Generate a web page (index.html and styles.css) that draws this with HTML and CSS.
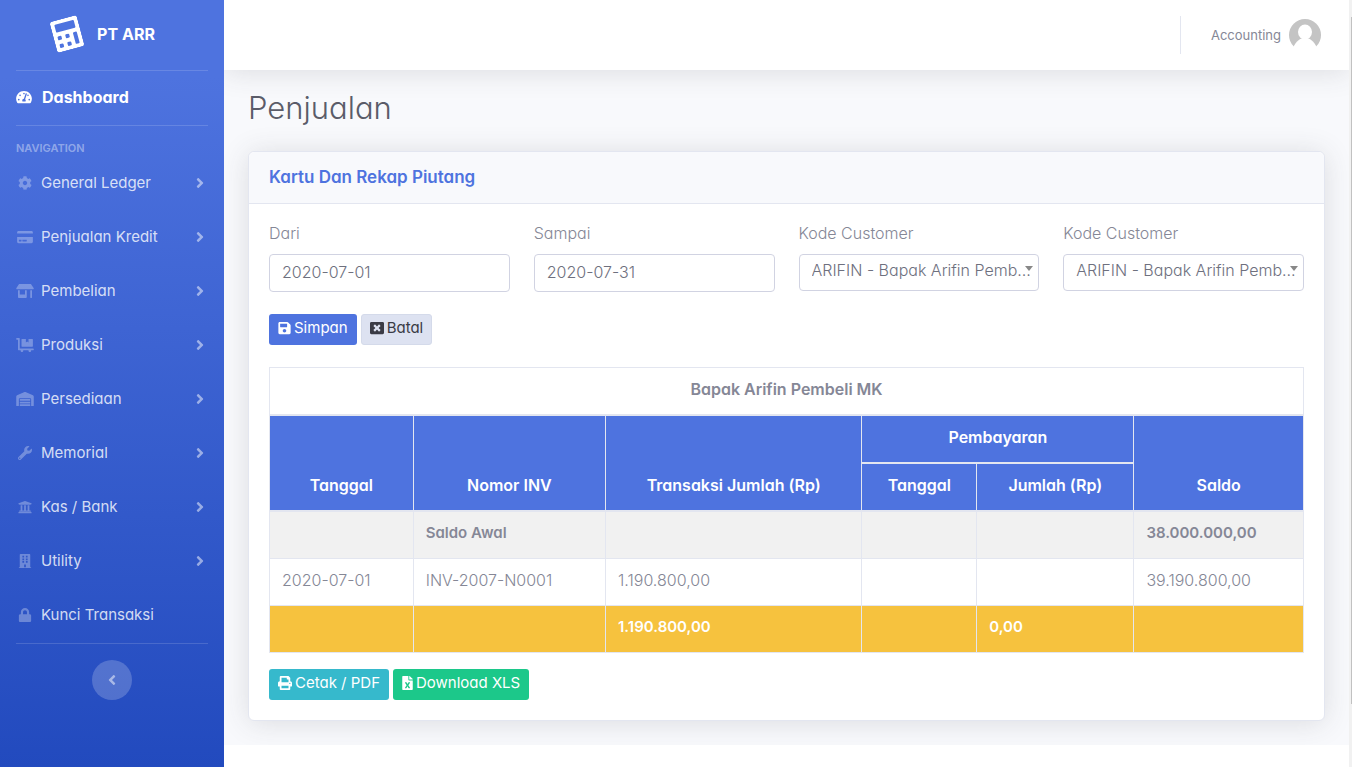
FILE: index.html
```html
<!DOCTYPE html>
<html lang="id">
<head>
<meta charset="utf-8">
<meta name="viewport" content="width=device-width, initial-scale=1">
<title>PT ARR - Penjualan</title>
<link rel="stylesheet" href="styles.css">
</head>
<body>
<svg class="sprite" aria-hidden="true">
  <symbol id="calculator" viewBox="0 0 448 512"><path d="M400 0H48C22.400 0 0 22.400 0 48v416c0 25.600 22.400 48 48 48h352c25.600 0 48-22.400 48-48V48c0-25.600-22.400-48-48-48zM128 435.200c0 6.400-6.400 12.800-12.800 12.800H76.800c-6.400 0-12.800-6.400-12.800-12.800v-38.400c0-6.400 6.400-12.800 12.800-12.800h38.400c6.400 0 12.800 6.400 12.800 12.800v38.400zm0-128c0 6.400-6.400 12.800-12.800 12.800H76.800c-6.400 0-12.800-6.400-12.800-12.800v-38.400c0-6.400 6.400-12.800 12.800-12.800h38.400c6.400 0 12.800 6.400 12.800 12.800v38.400zm128 128c0 6.400-6.400 12.800-12.800 12.800h-38.400c-6.400 0-12.800-6.400-12.800-12.800v-38.400c0-6.400 6.400-12.800 12.800-12.800h38.400c6.400 0 12.800 6.400 12.800 12.800v38.400zm0-128c0 6.400-6.400 12.800-12.800 12.800h-38.400c-6.400 0-12.800-6.400-12.800-12.800v-38.400c0-6.400 6.400-12.800 12.800-12.800h38.400c6.400 0 12.800 6.400 12.800 12.800v38.400zm128 128c0 6.400-6.400 12.800-12.800 12.800h-38.400c-6.400 0-12.800-6.400-12.800-12.800V268.800c0-6.400 6.400-12.800 12.800-12.800h38.400c6.400 0 12.800 6.400 12.800 12.800v166.400zm0-256c0 6.400-6.400 12.800-12.800 12.800H76.800c-6.400 0-12.800-6.400-12.800-12.800V76.800C64 70.400 70.400 64 76.800 64h294.400c6.400 0 12.800 6.400 12.800 12.800v102.400z"/></symbol>
  <symbol id="gauge" viewBox="0 0 576 512"><path d="M288 32C128.940 32 0 160.940 0 320c0 52.800 14.250 102.260 39.060 144.800 5.610 9.620 16.300 15.200 27.440 15.200h443c11.140 0 21.830-5.580 27.440-15.200C561.750 422.260 576 372.800 576 320c0-159.060-128.940-288-288-288zm0 64c14.710 0 26.580 10.130 30.320 23.650-1.110 2.260-2.640 4.230-3.450 6.670l-9.220 27.670c-5.130 3.490-10.970 6.010-17.640 6.010-17.670 0-32-14.330-32-32S270.330 96 288 96zM96 384c-17.670 0-32-14.330-32-32s14.330-32 32-32 32 14.330 32 32-14.330 32-32 32zm48-160c-17.670 0-32-14.330-32-32s14.330-32 32-32 32 14.330 32 32-14.330 32-32 32zm246.770-72.410l-61.330 184C343.130 347.330 352 364.540 352 384c0 11.720-3.380 22.550-8.880 32H232.880c-5.500-9.450-8.880-20.280-8.880-32 0-33.940 26.500-61.430 59.900-63.590l61.340-184.010c4.170-12.560 17.730-19.450 30.360-15.170 12.570 4.190 19.350 17.790 15.170 30.360zm14.660 57.200l15.520-46.550c3.470-1.290 7.130-2.230 11.050-2.230 17.670 0 32 14.330 32 32s-14.330 32-32 32c-11.380-.01-20.890-6.280-26.570-15.220zM480 384c-17.670 0-32-14.330-32-32s14.330-32 32-32 32 14.330 32 32-14.330 32-32 32z"/></symbol>
  <symbol id="cog" viewBox="0 0 512 512"><path d="M487.400 315.700l-42.600-24.600c4.300-23.200 4.300-47 0-70.200l42.600-24.600c4.900-2.800 7.100-8.600 5.500-14-11.100-35.600-30-67.800-54.700-94.600-3.800-4.100-10-5.100-14.800-2.300L380.800 110c-17.900-15.400-38.500-27.300-60.800-35.100V25.800c0-5.600-3.900-10.500-9.400-11.700-36.700-8.200-74.300-7.800-109.200 0-5.500 1.200-9.400 6.100-9.400 11.700V75c-22.200 7.900-42.800 19.800-60.800 35.100L88.700 85.500c-4.900-2.800-11-1.900-14.800 2.300-24.700 26.700-43.600 58.900-54.700 94.600-1.700 5.400.6 11.200 5.500 14L67.300 221c-4.300 23.200-4.300 47 0 70.200l-42.600 24.600c-4.900 2.800-7.100 8.600-5.500 14 11.100 35.600 30 67.800 54.700 94.600 3.800 4.100 10 5.100 14.800 2.300l42.600-24.600c17.900 15.400 38.500 27.300 60.800 35.100v49.200c0 5.600 3.900 10.500 9.400 11.700 36.700 8.200 74.300 7.800 109.200 0 5.500-1.200 9.400-6.100 9.400-11.700v-49.200c22.200-7.900 42.800-19.800 60.800-35.100l42.600 24.600c4.900 2.800 11 1.900 14.800-2.300 24.700-26.700 43.600-58.900 54.700-94.600 1.500-5.500-.7-11.300-5.600-14.100zM256 336c-44.100 0-80-35.900-80-80s35.900-80 80-80 80 35.900 80 80-35.900 80-80 80z"/></symbol>
  <symbol id="credit-card" viewBox="0 0 576 512"><path d="M0 432c0 26.500 21.500 48 48 48h480c26.500 0 48-21.500 48-48V256H0v176zm192-68c0-6.600 5.400-12 12-12h136c6.600 0 12 5.400 12 12v40c0 6.600-5.400 12-12 12H204c-6.600 0-12-5.400-12-12v-40zm-128 0c0-6.600 5.400-12 12-12h72c6.600 0 12 5.400 12 12v40c0 6.600-5.400 12-12 12H76c-6.600 0-12-5.400-12-12v-40zM576 80v48H0V80c0-26.500 21.500-48 48-48h480c26.500 0 48 21.500 48 48z"/></symbol>
  <symbol id="store" viewBox="0 0 640 512"><path d="M320 384H128V224H64v256c0 17.700 14.300 32 32 32h256c17.700 0 32-14.300 32-32V224h-64v160zm314.600-241.800l-85.300-128c-6-8.900-16-14.200-26.700-14.200H117.400c-10.700 0-20.700 5.300-26.600 14.200l-85.300 128c-14.200 21.300 1 49.800 26.600 49.800H608c25.500 0 40.700-28.500 26.600-49.800zM512 496c0 8.800 7.200 16 16 16h32c8.800 0 16-7.200 16-16V224h-64v272z"/></symbol>
  <symbol id="flatbed" viewBox="0 0 640 512"><path d="M208 320h384c8.800 0 16-7.200 16-16V48c0-8.800-7.200-16-16-16H448v128l-48-32-48 32V32H208c-8.800 0-16 7.200-16 16v256c0 8.800 7.200 16 16 16zm416 64H128V16c0-8.800-7.200-16-16-16H16C7.200 0 0 7.200 0 16v32c0 8.800 7.200 16 16 16h48v368c0 8.800 7.200 16 16 16h82.900c-1.800 5-2.900 10.400-2.900 16 0 26.500 21.500 48 48 48s48-21.500 48-48c0-5.600-1.200-11-2.900-16H451c-1.800 5-2.900 10.400-2.900 16 0 26.500 21.500 48 48 48s48-21.500 48-48c0-5.600-1.200-11-2.900-16H624c8.800 0 16-7.200 16-16v-32c0-8.800-7.200-16-16-16z"/></symbol>
  <symbol id="warehouse" viewBox="0 0 640 512"><path d="M504 352H136.400c-4.400 0-8 3.600-8 8l-.1 48c0 4.400 3.600 8 8 8H504c4.400 0 8-3.600 8-8v-48c0-4.400-3.600-8-8-8zm0 96H136.100c-4.400 0-8 3.600-8 8l-.1 48c0 4.400 3.600 8 8 8h368c4.400 0 8-3.600 8-8v-48c0-4.400-3.600-8-8-8zm0-192H136.600c-4.400 0-8 3.600-8 8l-.1 48c0 4.400 3.600 8 8 8H504c4.400 0 8-3.600 8-8v-48c0-4.400-3.600-8-8-8zm106.500-139L338.400 3.700a48.150 48.150 0 0 0-36.900 0L29.500 117C11.700 124.500 0 141.900 0 161.300V504c0 4.400 3.600 8 8 8h80c4.400 0 8-3.600 8-8V256c0-17.600 14.600-32 32.600-32h382.800c18 0 32.600 14.400 32.600 32v248c0 4.400 3.600 8 8 8h80c4.400 0 8-3.600 8-8V161.300c0-19.400-11.700-36.800-29.500-44.300z"/></symbol>
  <symbol id="wrench" viewBox="0 0 512 512"><path d="M507.730 109.100c-2.240-9.030-13.540-12.090-20.120-5.510l-74.360 74.360-67.880-11.310-11.310-67.880 74.360-74.360c6.620-6.620 3.430-17.900-5.660-20.160-47.380-11.740-99.550.91-136.580 37.930-39.640 39.640-50.550 97.100-34.050 147.200L18.740 402.760c-24.990 24.990-24.990 65.510 0 90.500 24.990 24.990 65.510 24.990 90.500 0l213.210-213.210c50.120 16.710 107.470 5.680 147.370-34.220 37.070-37.070 49.700-89.320 37.910-136.730zM64 472c-13.250 0-24-10.750-24-24 0-13.260 10.750-24 24-24s24 10.740 24 24c0 13.250-10.750 24-24 24z"/></symbol>
  <symbol id="bank" viewBox="0 0 512 512"><path d="M496 128v16a8 8 0 0 1-8 8h-24v12c0 6.627-5.373 12-12 12H60c-6.627 0-12-5.373-12-12v-12H24a8 8 0 0 1-8-8v-16a8 8 0 0 1 4.941-7.392l232-88a7.996 7.996 0 0 1 6.118 0l232 88A8 8 0 0 1 496 128zm-24 304H40c-13.255 0-24 10.745-24 24v16a8 8 0 0 0 8 8h464a8 8 0 0 0 8-8v-16c0-13.255-10.745-24-24-24zM96 192v192H60c-6.627 0-12 5.373-12 12v20h416v-20c0-6.627-5.373-12-12-12h-36V192h-64v192h-64V192h-64v192h-64V192H96z"/></symbol>
  <symbol id="building" viewBox="0 0 448 512"><path fill-rule="evenodd" d="M436 480h-20V24c0-13.255-10.745-24-24-24H56C42.745 0 32 10.745 32 24v456H12c-6.627 0-12 5.373-12 12v20h448v-20c0-6.627-5.373-12-12-12zM128 64h64v64h-64zM256 64h64v64h-64zM128 160h64v64h-64zM256 160h64v64h-64zM128 256h64v64h-64zM256 256h64v64h-64zM192 384h64v96h-64z"/></symbol>
  <symbol id="lock" viewBox="0 0 448 512"><path d="M400 224h-24v-72C376 68.200 307.800 0 224 0S72 68.200 72 152v72H48c-26.500 0-48 21.500-48 48v192c0 26.500 21.500 48 48 48h352c26.500 0 48-21.500 48-48V272c0-26.500-21.500-48-48-48zm-104 0H152v-72c0-39.700 32.300-72 72-72s72 32.300 72 72v72z"/></symbol>
  <symbol id="angle-right" viewBox="0 0 256 512"><path d="M224.300 273l-136 136c-9.400 9.400-24.600 9.400-33.900 0l-22.600-22.600c-9.400-9.400-9.400-24.600 0-33.900l96.400-96.400-96.400-96.400c-9.400-9.400-9.400-24.600 0-33.900L54.300 103c9.400-9.400 24.600-9.400 33.900 0l136 136c9.500 9.400 9.500 24.600.1 34z"/></symbol>
  <symbol id="angle-left" viewBox="0 0 256 512"><path d="M31.700 239l136-136c9.400-9.400 24.600-9.400 33.900 0l22.600 22.600c9.400 9.400 9.400 24.600 0 33.900L127.900 256l96.400 96.400c9.400 9.400 9.400 24.600 0 33.900L201.700 409c-9.400 9.400-24.600 9.400-33.900 0l-136-136c-9.500-9.400-9.500-24.600-.1-34z"/></symbol>
  <symbol id="save" viewBox="0 0 448 512"><path d="M433.941 129.941l-83.882-83.882A48 48 0 0 0 316.118 32H48C21.490 32 0 53.490 0 80v352c0 26.510 21.490 48 48 48h352c26.510 0 48-21.490 48-48V163.882a48 48 0 0 0-14.059-33.941zM224 416c-35.346 0-64-28.654-64-64 0-35.346 28.654-64 64-64s64 28.654 64 64c0 35.346-28.654 64-64 64zm96-304.520V212c0 6.627-5.373 12-12 12H76c-6.627 0-12-5.373-12-12V108c0-6.627 5.373-12 12-12h228.520c3.183 0 6.235 1.264 8.485 3.515l3.480 3.480A11.996 11.996 0 0 1 320 111.480z"/></symbol>
  <symbol id="close" viewBox="0 0 512 512"><path d="M464 32H48C21.500 32 0 53.500 0 80v352c0 26.500 21.500 48 48 48h416c26.500 0 48-21.500 48-48V80c0-26.500-21.500-48-48-48zm-83.600 290.500c4.800 4.800 4.800 12.600 0 17.400l-40.500 40.500c-4.800 4.800-12.600 4.800-17.400 0L256 313.300l-66.500 67.100c-4.800 4.800-12.600 4.800-17.400 0l-40.500-40.500c-4.800-4.800-4.800-12.600 0-17.400l67.100-66.500-67.100-66.500c-4.800-4.800-4.800-12.600 0-17.400l40.500-40.500c4.800-4.800 12.600-4.800 17.400 0l66.500 67.100 66.500-67.100c4.800-4.800 12.600-4.800 17.400 0l40.500 40.500c4.800 4.800 4.800 12.600 0 17.400L313.300 256l67.100 66.500z"/></symbol>
  <symbol id="print" viewBox="0 0 512 512"><path d="M448 192V77.250c0-8.490-3.370-16.620-9.370-22.630L393.370 9.370c-6-6-14.140-9.370-22.630-9.370H96C78.330 0 64 14.330 64 32v160c-35.350 0-64 28.650-64 64v112c0 8.840 7.160 16 16 16h48v96c0 17.670 14.330 32 32 32h320c17.670 0 32-14.330 32-32v-96h48c8.840 0 16-7.160 16-16V256c0-35.350-28.650-64-64-64zm-64 256H128v-96h256v96zm0-224H128V64h192v48c0 8.840 7.160 16 16 16h48v96zm48 72c-13.250 0-24-10.750-24-24 0-13.260 10.750-24 24-24s24 10.740 24 24c0 13.250-10.750 24-24 24z"/></symbol>
  <symbol id="excel" viewBox="0 0 384 512"><path d="M224 136V0H24C10.700 0 0 10.700 0 24v464c0 13.300 10.700 24 24 24h336c13.300 0 24-10.700 24-24V160H248c-13.200 0-24-10.800-24-24zm60.100 106.500L224 336l60.100 93.500c5.100 8-.6 18.500-10.100 18.500h-34.900c-4.400 0-8.500-2.400-10.600-6.300C208.900 405.500 192 373 192 373c-6.400 14.800-10 20-36.600 68.800-2.100 3.900-6.100 6.300-10.500 6.300H110c-9.500 0-15.200-10.500-10.100-18.500l60.300-93.500-60.300-93.500c-5.200-8 .6-18.500 10.100-18.500h34.800c4.400 0 8.500 2.400 10.600 6.300 26.100 48.800 20 33.600 36.600 68.500 0 0 6.100-11.700 36.600-68.500 2.100-3.900 6.200-6.300 10.600-6.300H274c9.500-.1 15.200 10.400 10.100 18.400zM384 121.900v6.100H256V0h6.100c6.400 0 12.500 2.500 17 7l97.900 98c4.500 4.500 7 10.600 7 16.900z"/></symbol>
</svg>

<div class="page">
  <aside class="sidebar">
    <a class="brand" href="#">
      <svg class="brand-icon"><use href="#calculator"/></svg>
      <span>PT ARR</span>
    </a>
    <hr class="divider">
    <nav class="nav">
      <a class="nav-link nav-active" href="#"><svg class="nav-icon"><use href="#gauge"/></svg><span class="nav-text">Dashboard</span></a>
      <hr class="divider">
      <h2 class="nav-heading">NAVIGATION</h2>
      <a class="nav-link" href="#"><svg class="nav-icon"><use href="#cog"/></svg><span class="nav-text">General Ledger</span><svg class="nav-arrow"><use href="#angle-right"/></svg></a>
      <a class="nav-link" href="#"><svg class="nav-icon"><use href="#credit-card"/></svg><span class="nav-text">Penjualan Kredit</span><svg class="nav-arrow"><use href="#angle-right"/></svg></a>
      <a class="nav-link" href="#"><svg class="nav-icon"><use href="#store"/></svg><span class="nav-text">Pembelian</span><svg class="nav-arrow"><use href="#angle-right"/></svg></a>
      <a class="nav-link" href="#"><svg class="nav-icon"><use href="#flatbed"/></svg><span class="nav-text">Produksi</span><svg class="nav-arrow"><use href="#angle-right"/></svg></a>
      <a class="nav-link" href="#"><svg class="nav-icon"><use href="#warehouse"/></svg><span class="nav-text">Persediaan</span><svg class="nav-arrow"><use href="#angle-right"/></svg></a>
      <a class="nav-link" href="#"><svg class="nav-icon"><use href="#wrench"/></svg><span class="nav-text">Memorial</span><svg class="nav-arrow"><use href="#angle-right"/></svg></a>
      <a class="nav-link" href="#"><svg class="nav-icon"><use href="#bank"/></svg><span class="nav-text">Kas / Bank</span><svg class="nav-arrow"><use href="#angle-right"/></svg></a>
      <a class="nav-link" href="#"><svg class="nav-icon"><use href="#building"/></svg><span class="nav-text">Utility</span><svg class="nav-arrow"><use href="#angle-right"/></svg></a>
      <a class="nav-link" href="#"><svg class="nav-icon"><use href="#lock"/></svg><span class="nav-text">Kunci Transaksi</span></a>
    </nav>
    <hr class="divider">
    <button class="collapse" type="button" aria-label="Toggle sidebar"><svg class="collapse-icon"><use href="#angle-left"/></svg></button>
  </aside>

  <div class="main">
    <div class="content">
      <header class="topbar">
        <a class="user" href="#">
          <span>Accounting</span>
          <svg class="avatar" viewBox="0 0 32 32" aria-hidden="true">
            <circle cx="16" cy="16" r="16" fill="#c4c4c4"/>
            <ellipse cx="16" cy="13" rx="7" ry="7.500" fill="#fff"/>
            <path fill="#fff" d="M4 29C7 22 11 19 16 19s9 3 12 10v3H4z"/>
          </svg>
        </a>
      </header>

      <main class="container">
        <h1 class="title">Penjualan</h1>
        <section class="card">
          <h2 class="card-header">Kartu Dan Rekap Piutang</h2>
          <div class="card-body">
            <form class="filters">
              <div class="fields">
                <div class="field"><label for="from">Dari</label><input class="control" id="from" type="text" value="2020-07-01"></div>
                <div class="field"><label for="to">Sampai</label><input class="control" id="to" type="text" value="2020-07-31"></div>
                <div class="field"><label for="customer-a">Kode Customer</label><div class="picker"><select class="control" id="customer-a"><option>ARIFIN - Bapak Arifin Pembeli MK</option></select></div></div>
                <div class="field"><label for="customer-b">Kode Customer</label><div class="picker"><select class="control" id="customer-b"><option>ARIFIN - Bapak Arifin Pembeli MK</option></select></div></div>
              </div>
              <div class="actions">
                <button class="btn btn-primary" type="button"><svg class="icon-save"><use href="#save"/></svg>Simpan</button>
                <button class="btn btn-light" type="button"><svg class="icon-wide"><use href="#close"/></svg>Batal</button>
              </div>
            </form>

            <table class="report">
              <colgroup><col class="c-date"><col class="c-inv"><col class="c-trx"><col class="c-paid"><col class="c-sum"><col class="c-bal"></colgroup>
              <thead>
                <tr class="customer"><th colspan="6">Bapak Arifin Pembeli MK</th></tr>
                <tr class="head"><th rowspan="2">Tanggal</th><th rowspan="2">Nomor INV</th><th rowspan="2">Transaksi Jumlah (Rp)</th><th colspan="2">Pembayaran</th><th rowspan="2">Saldo</th></tr>
                <tr class="head"><th>Tanggal</th><th>Jumlah (Rp)</th></tr>
              </thead>
              <tbody>
                <tr class="opening"><td></td><td>Saldo Awal</td><td></td><td></td><td></td><td>38.000.000,00</td></tr>
                <tr><td>2020-07-01</td><td>INV-2007-N0001</td><td>1.190.800,00</td><td></td><td></td><td>39.190.800,00</td></tr>
                <tr class="total"><td></td><td></td><td>1.190.800,00</td><td></td><td>0,00</td><td></td></tr>
              </tbody>
            </table>

            <div class="actions">
              <button class="btn btn-info" type="button"><svg class="icon-wide"><use href="#print"/></svg>Cetak / PDF</button>
              <button class="btn btn-success" type="button"><svg class="icon-file"><use href="#excel"/></svg>Download XLS</button>
            </div>
          </div>
        </section>
      </main>
    </div>
  </div>
  <div class="scroll-track"><div class="scroll-thumb"></div></div>
</div>
</body>
</html>
```

FILE: styles.css
```css
* {
  box-sizing: border-box;
}

body {
  margin: 0;
  font-family: Inter, "Open Sans", sans-serif;
  font-feature-settings: "cv11" 1;
  font-size: 16px;
  font-weight: 300;
  line-height: 22px;
  color: #858796;
  background: #fff;
}

.sprite {
  position: absolute;
  width: 0;
  height: 0;
}

svg {
  fill: currentColor;
  flex: none;
}

a {
  text-decoration: none;
}

.page {
  display: grid;
  grid-template-columns: 224px minmax(0, 1fr) 3px;
  min-height: 100vh;
}

/* Sidebar */
.sidebar {
  display: flex;
  flex-direction: column;
  color: #fff;
  background: linear-gradient(180deg, #4e73df 10%, #224abe 100%);
}

.brand {
  display: flex;
  align-items: center;
  justify-content: center;
  gap: 16px;
  height: 70px;
  padding: 0 16px 2px 0;
  color: #fff;
  font-size: 16px;
  font-weight: 700;
}

.brand-icon {
  width: 28px;
  height: 32px;
  transform: rotate(-15deg);
}

.divider {
  width: auto;
  height: 1px;
  margin: 0 16px;
  border: 0;
  background: rgba(255, 255, 255, 0.15);
}

.nav {
  display: flex;
  flex-direction: column;
  padding-bottom: 1px;
}

.nav-link {
  display: flex;
  align-items: center;
  gap: 7px;
  height: 54px;
  padding: 0 20px 0 16px;
  color: rgba(255, 255, 255, 0.8);
  font-size: 15px;
  font-weight: 400;
}

.nav-active {
  gap: 10px;
  padding-bottom: 2px;
  color: #fff;
  font-size: 16px;
  font-weight: 700;
}

.nav-icon {
  width: 18px;
  height: 14px;
  color: rgba(255, 255, 255, 0.3);
}

.nav-active .nav-icon {
  width: 16px;
  color: #fff;
}

.nav-text {
  flex: 1;
}

.nav-arrow {
  width: 8px;
  height: 16px;
  color: rgba(255, 255, 255, 0.5);
}

.nav-heading {
  margin: 14px 16px 0;
  font-size: 11px;
  font-weight: 600;
  line-height: 16px;
  color: rgba(255, 255, 255, 0.4);
}

.collapse {
  display: flex;
  align-items: center;
  justify-content: center;
  align-self: center;
  width: 40px;
  height: 40px;
  margin: 16px 0;
  padding: 0;
  border: 0;
  border-radius: 50%;
  color: rgba(255, 255, 255, 0.5);
  background: rgba(255, 255, 255, 0.2);
}

.collapse-icon {
  width: 8px;
  height: 16px;
}

/* Content */
.content {
  overflow: hidden;
  padding-bottom: 24px;
  background: #f8f9fc;
}

.topbar {
  display: flex;
  align-items: center;
  justify-content: flex-end;
  height: 70px;
  padding: 0 28px;
  background: #fff;
  box-shadow: 0 2px 28px rgba(58, 59, 69, 0.15);
}

.user {
  display: flex;
  align-items: center;
  gap: 8px;
  height: 38px;
  padding-left: 30px;
  border-left: 1px solid #e3e6f0;
  color: #858796;
  font-size: 13px;
  font-weight: 400;
}

.avatar {
  width: 32px;
  height: 32px;
}

.container {
  padding: 20px 24px 0;
}

.title {
  margin: 0 0 25px;
  font-size: 31px;
  font-weight: 300;
  line-height: 36px;
  color: #5a5c69;
}

.card {
  border: 1px solid #e3e6f0;
  border-radius: 6px;
  background: #fff;
  box-shadow: 0 2px 28px rgba(58, 59, 69, 0.15);
}

.card-header {
  margin: 0;
  padding: 14px 20px 15px;
  border-bottom: 1px solid #e3e6f0;
  border-radius: 6px 6px 0 0;
  font-size: 17px;
  font-weight: 600;
  color: #4e73df;
  background: #f8f9fc;
}

.card-body {
  padding: 18px 20px 20px;
}

.fields {
  display: grid;
  grid-template-columns: repeat(4, minmax(0, 1fr));
  gap: 24px;
}

.field {
  display: flex;
  flex-direction: column;
  gap: 10px;
}

.control {
  width: 100%;
  height: 38px;
  padding: 0 12px 2px;
  border: 1px solid #d1d3e2;
  border-radius: 4px;
  font: inherit;
  color: #6e707e;
  background: #fff;
}

.picker {
  position: relative;
}

.picker .control {
  height: 37px;
  padding: 0 6px 5px 12px;
  appearance: none;
  overflow: hidden;
  text-overflow: ellipsis;
  white-space: nowrap;
}

.picker::after {
  content: "";
  position: absolute;
  top: 12px;
  right: 6px;
  border: 4px solid transparent;
  border-top: 5px solid #888;
  border-bottom: 0;
}

.actions {
  display: flex;
  gap: 4px;
}

.filters .actions {
  margin: 22px 0;
}

.btn {
  display: flex;
  align-items: center;
  gap: 3px;
  height: 31px;
  padding: 0 8px 3px;
  border: 1px solid transparent;
  border-radius: 3px;
  font: inherit;
  font-size: 15px;
  font-weight: 400;
  color: #fff;
}

.btn-primary {
  background: #4e73df;
}

.btn-light {
  border-color: #d4daea;
  color: #3a3b45;
  background: #dde2f1;
}

.btn-info {
  background: #36b9cc;
}

.btn-success {
  background: #1cc88a;
}

.icon-save {
  width: 13px;
  height: 14px;
}

.icon-wide {
  width: 14px;
  height: 14px;
}

.icon-file {
  width: 11px;
  height: 14px;
}

/* Report */
.report {
  width: 100%;
  margin-bottom: 16px;
  border-collapse: collapse;
  table-layout: fixed;
}

.c-date { width: 13.900%; }
.c-inv { width: 18.600%; }
.c-trx { width: 24.800%; }
.c-paid { width: 11.100%; }
.c-sum { width: 15.200%; }
.c-bal { width: 16.400%; }

.report th,
.report td {
  height: 47px;
  padding: 10px 12px 14px;
  border: 1px solid #e3e6f0;
  text-align: left;
}

.report th {
  border-bottom-width: 2px;
  font-weight: 600;
  text-align: center;
  vertical-align: bottom;
}

.head th {
  color: #fff;
  background: #4e73df;
}

.opening td {
  font-size: 15px;
  font-weight: 600;
  background: #f1f1f1;
}

.total td {
  font-size: 15px;
  font-weight: 600;
  color: #fff;
  background: #f6c23e;
}

/* Scrollbar */
.scroll-track {
  padding: 17px 0 63px 2px;
  background: #f1f1f1;
}

.scroll-thumb {
  height: 100%;
  background: #c1c1c1;
}
```
